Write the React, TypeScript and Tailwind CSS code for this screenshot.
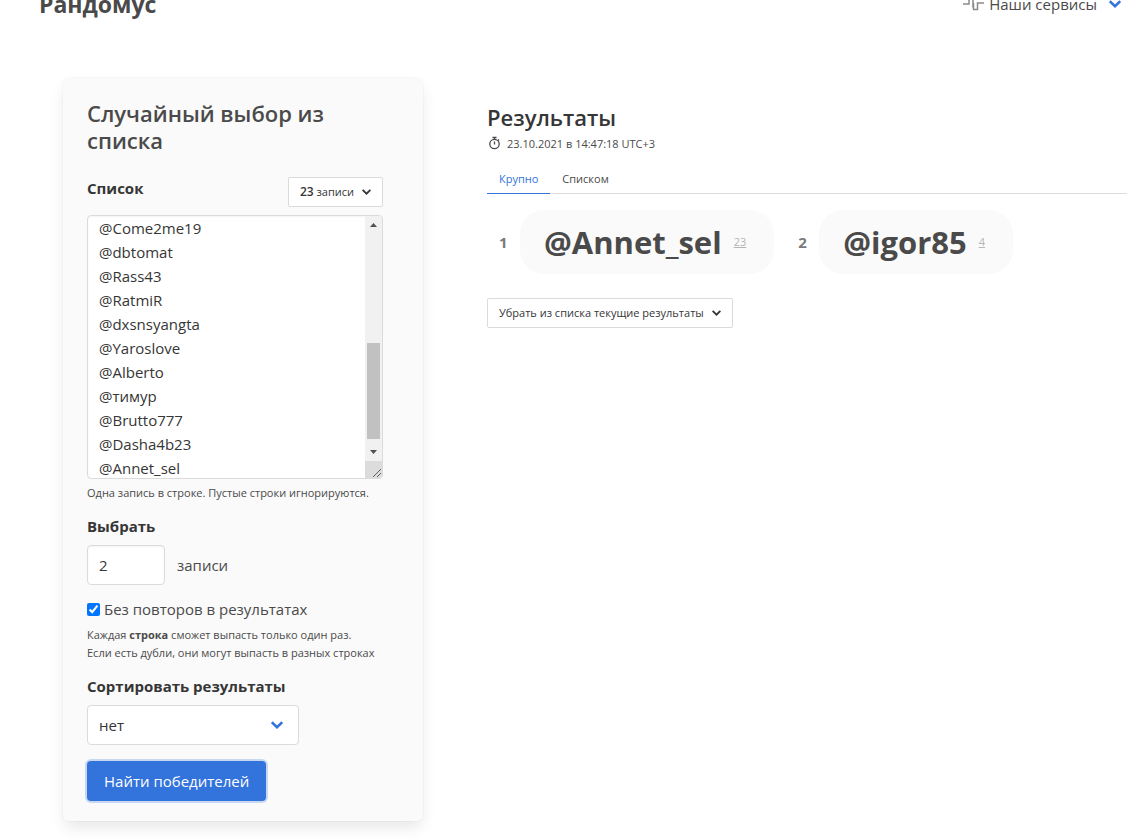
import { useState } from "react";

const entries = [
    "@Come2me19",
    "@dbtomat",
    "@Rass43",
    "@RatmiR",
    "@dxsnsyangta",
    "@Yaroslove",
    "@Alberto",
    "@тимур",
    "@Brutto777",
    "@Dasha4b23",
    "@Annet_sel",
];

const winners = [
    { place: 1, name: "@Annet_sel", line: 23 },
    { place: 2, name: "@igor85", line: 4 },
];

function Chevron({ className }: { className: string }) {
    return (
        <svg viewBox="0 0 12 8" className={className} fill="none" stroke="currentColor" aria-hidden="true">
            <path d="M.8 1.200 6 6.200l5.200-5" />
        </svg>
    );
}

function ScrollTrack() {
    return (
        <div className="pointer-events-none absolute inset-y-px right-px flex w-[17px] flex-col overflow-hidden rounded-r-[3px] bg-[#f1f1f1]" aria-hidden="true">
            <svg viewBox="0 0 17 17" className="h-[17px] w-[17px] shrink-0" fill="#505050">
                <path d="M5 11h7L8.500 7z" />
            </svg>
            <div className="flex flex-1 flex-col justify-end px-[2px] pb-[5px]">
                <div className="h-24 bg-[#c1c1c1]" />
            </div>
            <svg viewBox="0 0 17 17" className="h-[17px] w-[17px] shrink-0" fill="#505050">
                <path d="M5 6h7l-3.500 4z" />
            </svg>
            <svg viewBox="0 0 17 17" className="h-[17px] w-[17px] shrink-0 bg-[#dcdcdc]" fill="none" stroke="#606060">
                <path d="M8 16l8-8M12 16l4-4" />
            </svg>
        </div>
    );
}

function Header() {
    return (
        <header className="-mt-6 flex h-14 items-center justify-between pr-1.5 pl-[39px]">
            <a href="#" className="text-[23px] font-bold text-[#4a4a4a]">Рандомус</a>
            <button type="button" className="flex items-center text-[#4a4a4a]">
                <svg viewBox="0 0 22 16" className="mr-1 h-4 w-[22px]" fill="none" stroke="#8a8a8a" strokeWidth="1.500" aria-hidden="true">
                    <path d="M0 8h6V1.500h4v10" />
                    <path d="M10.500 7v6.500h4V7H21" />
                </svg>
                Наши сервисы
                <Chevron className="ml-3 h-2 w-3 stroke-[2.500] text-[#3273dc]" />
            </button>
        </header>
    );
}

function PickerForm() {
    const [list, setList] = useState(entries.join("\n"));
    const [count, setCount] = useState("2");
    const [unique, setUnique] = useState(true);

    return (
        <form
            onSubmit={(e) => e.preventDefault()}
            className="w-[360px] shrink-0 rounded-md bg-[#fafafa] px-6 pt-[22px] pb-5 shadow-[0_8px_16px_-2px_rgba(10,10,10,0.1),0_0_0_1px_rgba(10,10,10,0.02)]"
        >
            <h1 className="text-[22px] leading-[27px] font-semibold text-[#4a4a4a]">Случайный выбор из списка</h1>

            <div className="mt-[22px] mr-4">
                <div className="flex h-[34px] items-start justify-between">
                    <label htmlFor="list" className="font-bold">Список</label>
                    <button type="button" className="mt-px flex h-[30px] items-center rounded-xs border border-[#dbdbdb] bg-white px-[11px] text-[11px]">
                        <span><span className="text-xs font-semibold">23</span> записи</span>
                        <Chevron className="ml-2 h-1.5 w-[9px] stroke-[2.500]" />
                    </button>
                </div>
                <div className="relative mt-[5px] h-[264px]">
                    <textarea
                        id="list"
                        value={list}
                        onChange={(e) => setList(e.target.value)}
                        className="block h-full w-full resize-none overflow-hidden rounded border border-[#dbdbdb] bg-white pr-5 pl-[11px] leading-6 shadow-[inset_0_1px_2px_rgba(10,10,10,0.05)] outline-none"
                    />
                    <ScrollTrack />
                </div>
            </div>
            <p className="mt-[5px] text-[11px] leading-[18px] whitespace-nowrap text-[#4a4a4a]">Одна запись в строке. Пустые строки игнорируются.</p>

            <label htmlFor="count" className="mt-3 block font-bold">Выбрать</label>
            <div className="mt-[7px] flex items-center gap-3">
                <input
                    id="count"
                    type="text"
                    inputMode="numeric"
                    value={count}
                    onChange={(e) => setCount(e.target.value)}
                    className="h-10 w-[78px] rounded border border-[#dbdbdb] bg-white px-[11px] shadow-[inset_0_1px_2px_rgba(10,10,10,0.05)] outline-none"
                />
                <span className="text-[#4a4a4a]">записи</span>
            </div>

            <label className="mt-3 flex items-center gap-1 text-[#4a4a4a]">
                <input type="checkbox" checked={unique} onChange={(e) => setUnique(e.target.checked)} className="h-[13px] w-[13px] accent-[#0075ff]" />
                Без повторов в результатах
            </label>
            <p className="mt-[5px] text-[11px] leading-[18px] whitespace-nowrap text-[#4a4a4a]">
                Каждая <strong>строка</strong> сможет выпасть только один раз.
                <br />
                Если есть дубли, они могут выпасть в разных строках
            </p>

            <label htmlFor="sort" className="mt-3 block font-bold">Сортировать результаты</label>
            <div className="relative mt-[7px] w-[212px]">
                <select id="sort" className="h-10 w-full appearance-none rounded border border-[#dbdbdb] bg-white px-[11px] outline-none">
                    <option>нет</option>
                </select>
                <Chevron className="pointer-events-none absolute top-4 right-4 h-2 w-3 stroke-[2.500] text-[#3273dc]" />
            </div>

            <button type="submit" className="mt-4 h-10 rounded bg-[#3273dc] px-[17px] text-white shadow-[0_0_0_2px_rgba(50,115,220,0.25)]">
                Найти победителей
            </button>
        </form>
    );
}

function Results() {
    return (
        <section className="min-w-0 flex-1 pt-6">
            <h2 className="text-[22px] leading-[30px] font-semibold">Результаты</h2>
            <p className="mt-[3px] flex items-center text-[11px] leading-[18px] text-[#4a4a4a]">
                <svg viewBox="0 0 16 16" className="mr-1 h-4 w-4" fill="none" stroke="#4a4a4a" strokeWidth="1.300" aria-hidden="true">
                    <circle cx="7.500" cy="8" r="4.700" />
                    <path d="M7.500 3.500V1.500M5.500 1.500h4M7.500 5.500V8.500M11 4.500l1-1" />
                </svg>
                23.10.2021 в 14:47:18 UTC+3
            </p>

            <div role="tablist" className="mt-3 flex border-b border-[#dbdbdb] text-[11px] leading-[18px]">
                <button type="button" role="tab" aria-selected="true" className="-mb-px border-b border-[#3273dc] px-3 py-[5px] text-[#3273dc]">Крупно</button>
                <button type="button" role="tab" aria-selected="false" className="px-3 py-[5px] text-[#4a4a4a]">Списком</button>
            </div>

            <ol className="mt-4 flex flex-wrap">
                {winners.map((w) => (
                    <li key={w.place} className="mr-3 flex items-center">
                        <span className="w-[33px] pl-3 font-bold text-[#7a7a7a]">{w.place}</span>
                        <div className="flex h-16 items-center rounded-3xl bg-[#fafafa] px-6">
                            <span className="text-[31px] font-bold text-[#4a4a4a]">{w.name}</span>
                            <a href="#list" className="mr-1 ml-3 text-[11px] text-[#b5b5b5] underline">{w.line}</a>
                        </div>
                    </li>
                ))}
            </ol>

            <button type="button" className="mt-6 flex h-[30px] items-center rounded-xs border border-[#dbdbdb] bg-white px-[11px] text-[11px]">
                Убрать из списка текущие результаты
                <Chevron className="ml-2 h-1.5 w-[9px] stroke-[2.500]" />
            </button>
        </section>
    );
}

export default function App() {
    return (
        <div className="min-h-screen overflow-hidden bg-white font-['Open_Sans','Noto_Sans',sans-serif] text-[15px] leading-6 text-[#363636]">
            <Header />
            <main className="flex items-start gap-16 pt-[46px] pb-4 pl-[63px]">
                <PickerForm />
                <Results />
            </main>
        </div>
    );
}
